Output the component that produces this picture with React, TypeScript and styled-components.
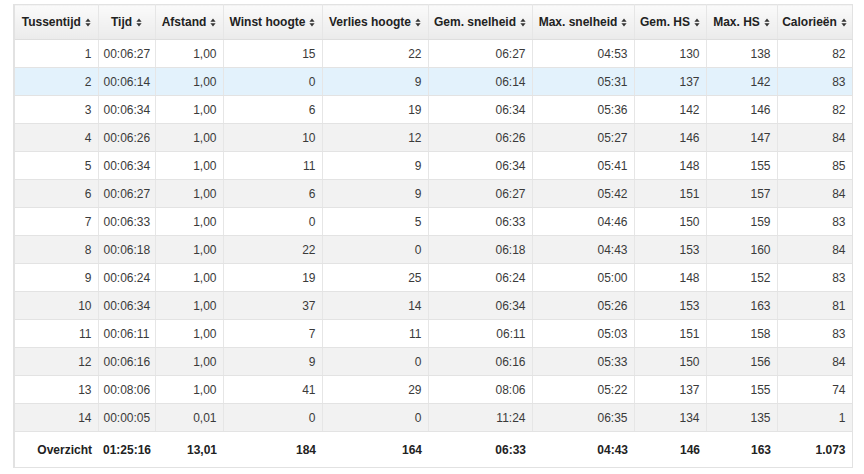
import React from 'react'
import styled, { createGlobalStyle, css } from 'styled-components'

const GlobalStyle = createGlobalStyle`
  body {
    margin: 0;
    background: #fff;
    font-family: "Liberation Sans", Arial, sans-serif;
  }
`

const Page = styled.div`
  padding: 4px 0 0 13px;
`

const Table = styled.table`
  width: 838px;
  table-layout: fixed;
  border-collapse: collapse;
  border: 1px solid #e2e2e2;
  border-left: 2px solid #e2e2e2;
  font-size: 12px;
  color: #3a3a3a;
`

const HeadCell = styled.th`
  height: 34px;
  padding: 0 2px;
  text-align: center;
  font-weight: bold;
  color: #222;
  white-space: nowrap;
  background: linear-gradient(#fafafa, #ebebeb);
  border-left: 1px solid #e6e6e6;
  border-bottom: 1px solid #dedede;
  &:first-child {
    border-left: none;
  }
`

const Row = styled.tr<{ tone: 'white' | 'gray' | 'blue' }>`
  height: 28px;
  background: #fff;
  ${p => p.tone === 'gray' && css`background: #f2f2f2;`}
  ${p => p.tone === 'blue' && css`background: #e3f2fc;`}
`

const Cell = styled.td<{ align?: 'left' | 'right' }>`
  padding: 0 6px 0 5px;
  text-align: ${p => p.align || 'right'};
  border-left: 1px solid #e6e6e6;
  border-bottom: 1px solid #e3e3e3;
  &:first-child {
    border-left: none;
  }
`

const TotalRow = styled.tr`
  height: 36px;
  background: #fff;
`

const TotalCell = styled.td<{ align?: 'left' | 'right' }>`
  padding: 0 6px 0 5px;
  text-align: ${p => p.align || 'right'};
  font-weight: bold;
  color: #222;
`

const SortIcon = () => (
  <svg width="6" height="9" viewBox="0 0 6 9" style={{ marginLeft: 4, verticalAlign: -1 }}>
    <path d="M3 0.5 L5.6 3.8 L0.4 3.8 Z" fill="#333" />
    <path d="M3 8.5 L5.6 5.2 L0.4 5.2 Z" fill="#333" />
  </svg>
)

const headers = [
  'Tussentijd', 'Tijd', 'Afstand', 'Winst hoogte', 'Verlies hoogte',
  'Gem. snelheid', 'Max. snelheid', 'Gem. HS', 'Max. HS', 'Calorieën',
]
const widths = [84, 57, 68, 99, 106, 104, 102, 72, 71, 75]

const rows: string[][] = [
  ['1', '00:06:27', '1,00', '15', '22', '06:27', '04:53', '130', '138', '82'],
  ['2', '00:06:14', '1,00', '0', '9', '06:14', '05:31', '137', '142', '83'],
  ['3', '00:06:34', '1,00', '6', '19', '06:34', '05:36', '142', '146', '82'],
  ['4', '00:06:26', '1,00', '10', '12', '06:26', '05:27', '146', '147', '84'],
  ['5', '00:06:34', '1,00', '11', '9', '06:34', '05:41', '148', '155', '85'],
  ['6', '00:06:27', '1,00', '6', '9', '06:27', '05:42', '151', '157', '84'],
  ['7', '00:06:33', '1,00', '0', '5', '06:33', '04:46', '150', '159', '83'],
  ['8', '00:06:18', '1,00', '22', '0', '06:18', '04:43', '153', '160', '84'],
  ['9', '00:06:24', '1,00', '19', '25', '06:24', '05:00', '148', '152', '83'],
  ['10', '00:06:34', '1,00', '37', '14', '06:34', '05:26', '153', '163', '81'],
  ['11', '00:06:11', '1,00', '7', '11', '06:11', '05:03', '151', '158', '83'],
  ['12', '00:06:16', '1,00', '9', '0', '06:16', '05:33', '150', '156', '84'],
  ['13', '00:08:06', '1,00', '41', '29', '08:06', '05:22', '137', '155', '74'],
  ['14', '00:00:05', '0,01', '0', '0', '11:24', '06:35', '134', '135', '1'],
]

const totals = ['Overzicht', '01:25:16', '13,01', '184', '164', '06:33', '04:43', '146', '163', '1.073']

export default function App() {
  return (
    <Page>
      <GlobalStyle />
      <Table>
        <colgroup>
          {widths.map((w, i) => <col key={i} style={{ width: w }} />)}
        </colgroup>
        <thead>
          <tr>
            {headers.map(h => (
              <HeadCell key={h}>{h}<SortIcon /></HeadCell>
            ))}
          </tr>
        </thead>
        <tbody>
          {rows.map((r, i) => (
            <Row key={i} tone={i === 1 ? 'blue' : i % 2 === 1 ? 'gray' : 'white'}>
              {r.map((v, j) => (
                <Cell key={j} align={j === 1 ? 'left' : 'right'}>{v}</Cell>
              ))}
            </Row>
          ))}
          <TotalRow>
            {totals.map((v, j) => (
              <TotalCell key={j} align={j === 1 ? 'left' : 'right'}>{v}</TotalCell>
            ))}
          </TotalRow>
        </tbody>
      </Table>
    </Page>
  )
}
